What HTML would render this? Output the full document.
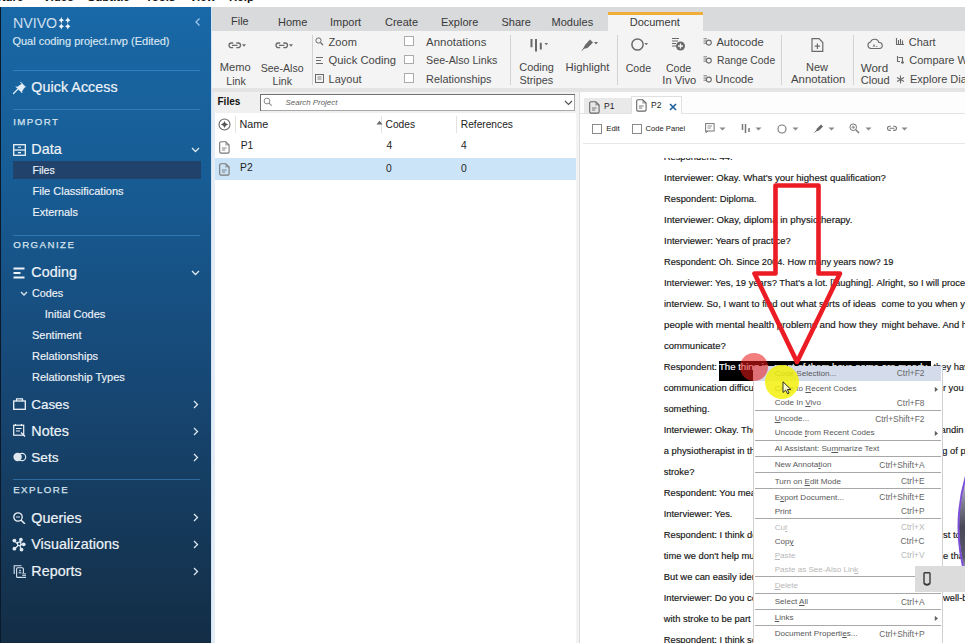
<!DOCTYPE html>
<html><head><meta charset="utf-8"><style>
html,body{margin:0;padding:0;width:965px;height:643px;overflow:hidden;background:#fff}
body{position:relative;font-family:"Liberation Sans",sans-serif}
.t{position:absolute;white-space:pre}
.d{-webkit-text-stroke:0.15px currentColor}
.r{position:absolute;display:block}
u{text-decoration:underline;text-underline-offset:1px}
</style></head><body>
<div class="r" style="left:0.00px;top:0.00px;width:965.00px;height:7.00px;background:#ffffff;"></div>
<div class="t" style="left:-20.00px;top:-8.43px;font-size:11.5px;line-height:11.5px;color:#111;font-weight:bold">Capture</div>
<div class="t" style="left:43.00px;top:-8.43px;font-size:11.5px;line-height:11.5px;color:#111;font-weight:bold">Video</div>
<div class="t" style="left:87.60px;top:-8.43px;font-size:11.5px;line-height:11.5px;color:#111;font-weight:bold">Subtitle</div>
<div class="t" style="left:145.50px;top:-8.43px;font-size:11.5px;line-height:11.5px;color:#111;font-weight:bold">Tools</div>
<div class="t" style="left:189.60px;top:-8.43px;font-size:11.5px;line-height:11.5px;color:#111;font-weight:bold">View</div>
<div class="t" style="left:229.00px;top:-8.43px;font-size:11.5px;line-height:11.5px;color:#111;font-weight:bold">Help</div>
<div class="r" style="left:0.00px;top:7.00px;width:211.00px;height:636.00px;background:linear-gradient(180deg,#1968a7 0%,#175c94 27%,#174a79 55%,#153a5c 80%,#132d45 100%);"></div>
<div class="r" style="left:0.00px;top:7.00px;width:1.00px;height:636.00px;background:#0a1a2a;"></div>
<div class="r" style="left:211.00px;top:7.00px;width:1.00px;height:636.00px;background:#cfe3f5;"></div>
<div class="t" style="left:12.60px;top:14.58px;font-size:15.5px;line-height:15.5px;color:rgba(240,248,255,0.85);transform:scaleX(0.915);transform-origin:0 0">NVIVO</div>
<svg class="r" style="left:57px;top:16px;" width="14" height="14" viewBox="0 0 14 14"><path d="M4.3 1.0999999999999996Q4.7 3.9 7.0 4.3Q4.7 4.7 4.3 7.5Q3.9 4.7 1.5999999999999996 4.3Q3.9 3.9 4.3 1.0999999999999996Z" fill="#f2f6fa"/><path d="M10.8 1.0999999999999996Q11.200000000000001 3.9 13.5 4.3Q11.200000000000001 4.7 10.8 7.5Q10.4 4.7 8.100000000000001 4.3Q10.4 3.9 10.8 1.0999999999999996Z" fill="#f2f6fa"/><path d="M4.3 7.2Q4.7 10.0 7.0 10.4Q4.7 10.8 4.3 13.600000000000001Q3.9 10.8 1.5999999999999996 10.4Q3.9 10.0 4.3 7.2Z" fill="#f2f6fa"/><path d="M10.8 7.2Q11.200000000000001 10.0 13.5 10.4Q11.200000000000001 10.8 10.8 13.600000000000001Q10.4 10.8 8.100000000000001 10.4Q10.4 10.0 10.8 7.2Z" fill="#f2f6fa"/></svg>
<svg class="r" style="left:194px;top:17px;" width="8" height="10" viewBox="0 0 8 10"><path d="M5.5 1.5L2 5L5.5 8.5" stroke="#9cc6ee" stroke-width="1.3" fill="none"/></svg>
<div class="t" style="left:12.40px;top:36.09px;font-size:11px;line-height:11px;color:#dce7f1;-webkit-text-stroke:0.15px #dce7f1">Qual coding project.nvp (Edited)</div>
<div class="r" style="left:13.00px;top:70.00px;width:187.00px;height:1.00px;background:rgba(80,165,235,0.42);"></div>
<svg class="r" style="left:12px;top:80px;" width="15" height="15" viewBox="0 0 15 15"><path d="M1.5 13.5L6 9" stroke="#e6f0fa" stroke-width="1.3" stroke-linecap="round"/><path d="M8.3 1.8L13.5 7L12.2 7.6L9.6 11.8L10.2 13L3.8 6.6L5 7.2L9.2 4.6L9.8 3.3Z" fill="#e6f0fa" stroke="#e6f0fa" stroke-width="0.6" stroke-linejoin="round"/></svg>
<div class="t" style="left:31.30px;top:80.00px;font-size:14.3px;line-height:14.3px;color:#eef3f8;letter-spacing:0.05px;-webkit-text-stroke:0.2px #eef3f8">Quick Access</div>
<div class="r" style="left:13.00px;top:109.30px;width:187.00px;height:1.00px;background:rgba(80,165,235,0.42);"></div>
<div class="t" style="left:13.20px;top:116.99px;font-size:9.7px;line-height:9.7px;color:#d6e3ef;letter-spacing:1.45px;-webkit-text-stroke:0.25px #d6e3ef">IMPORT</div>
<svg class="r" style="left:13px;top:144px;" width="13" height="12" viewBox="0 0 13 12"><rect x="0.7" y="0.7" width="11.6" height="10.6" fill="none" stroke="#eef3f8" stroke-width="1.3"/><path d="M0.7 6H12.3" stroke="#eef3f8" stroke-width="1.3"/><path d="M5 3.3H8M5 8.6H8" stroke="#eef3f8" stroke-width="1.1"/></svg>
<div class="t" style="left:31.30px;top:142.40px;font-size:14.3px;line-height:14.3px;color:#eef3f8;letter-spacing:0.05px;-webkit-text-stroke:0.2px #eef3f8">Data</div>
<svg class="r" style="left:191px;top:146.5px;" width="9" height="6" viewBox="0 0 9 6"><path d="M1 1L4.5 4.5L8 1" stroke="#dfe8f2" stroke-width="1.3" fill="none"/></svg>
<div class="r" style="left:13.20px;top:161.00px;width:187.40px;height:18.30px;background:#21426a;"></div>
<div class="t" style="left:32.50px;top:165.31px;font-size:10.5px;line-height:10.5px;color:#eef3f8;-webkit-text-stroke:0.15px #eef3f8">Files</div>
<div class="t" style="left:32.50px;top:186.09px;font-size:11px;line-height:11px;color:#eef3f8;-webkit-text-stroke:0.15px #eef3f8">File Classifications</div>
<div class="t" style="left:32.50px;top:207.07px;font-size:10.9px;line-height:10.9px;color:#eef3f8;-webkit-text-stroke:0.15px #eef3f8">Externals</div>
<div class="r" style="left:13.00px;top:235.20px;width:187.00px;height:1.00px;background:rgba(80,165,235,0.42);"></div>
<div class="t" style="left:13.20px;top:240.19px;font-size:9.7px;line-height:9.7px;color:#d6e3ef;letter-spacing:1.45px;-webkit-text-stroke:0.25px #d6e3ef">ORGANIZE</div>
<svg class="r" style="left:13px;top:267px;" width="13" height="12" viewBox="0 0 13 12"><path d="M0.5 1.5H11.5M0.5 6H7.5M0.5 10.5H11.5" stroke="#eef3f8" stroke-width="2"/></svg>
<div class="t" style="left:31.30px;top:265.40px;font-size:14.3px;line-height:14.3px;color:#eef3f8;letter-spacing:0.05px;-webkit-text-stroke:0.2px #eef3f8">Coding</div>
<svg class="r" style="left:191px;top:269.5px;" width="9" height="6" viewBox="0 0 9 6"><path d="M1 1L4.5 4.5L8 1" stroke="#dfe8f2" stroke-width="1.3" fill="none"/></svg>
<svg class="r" style="left:20px;top:290.5px;" width="8" height="6" viewBox="0 0 8 6"><path d="M1 1L4 4L7 1" stroke="#dfe8f2" stroke-width="1.3" fill="none"/></svg>
<div class="t" style="left:32.00px;top:288.46px;font-size:10.8px;line-height:10.8px;color:#eef3f8;-webkit-text-stroke:0.15px #eef3f8">Codes</div>
<div class="t" style="left:44.80px;top:309.19px;font-size:11px;line-height:11px;color:#eef3f8;-webkit-text-stroke:0.15px #eef3f8">Initial Codes</div>
<div class="t" style="left:32.00px;top:330.09px;font-size:11px;line-height:11px;color:#eef3f8;-webkit-text-stroke:0.15px #eef3f8">Sentiment</div>
<div class="t" style="left:32.00px;top:351.09px;font-size:11px;line-height:11px;color:#eef3f8;-webkit-text-stroke:0.15px #eef3f8">Relationships</div>
<div class="t" style="left:32.00px;top:371.99px;font-size:11px;line-height:11px;color:#eef3f8;-webkit-text-stroke:0.15px #eef3f8">Relationship Types</div>
<svg class="r" style="left:13px;top:398px;" width="13" height="12" viewBox="0 0 13 12"><rect x="0.7" y="3" width="11.6" height="8.3" fill="none" stroke="#eef3f8" stroke-width="1.3"/><path d="M3.5 3V0.8H9.5V3" stroke="#eef3f8" stroke-width="1.2" fill="none"/></svg>
<div class="t" style="left:31.30px;top:397.86px;font-size:13.4px;line-height:13.4px;color:#eef3f8;-webkit-text-stroke:0.2px #eef3f8">Cases</div>
<svg class="r" style="left:192.5px;top:399.5px;" width="6" height="9" viewBox="0 0 6 9"><path d="M1 1L4.5 4.5L1 8" stroke="#dfe8f2" stroke-width="1.3" fill="none"/></svg>
<svg class="r" style="left:13px;top:424px;" width="13" height="13" viewBox="0 0 13 13"><rect x="0.7" y="1.2" width="10" height="10" fill="none" stroke="#eef3f8" stroke-width="1.2"/><path d="M3 4.5H8.5M3 7H7" stroke="#eef3f8" stroke-width="1.1"/><path d="M8 8.5L12 12.5" stroke="#eef3f8" stroke-width="1.3"/><path d="M2.5 0V2M8.5 0V2" stroke="#eef3f8" stroke-width="1"/></svg>
<div class="t" style="left:31.30px;top:423.70px;font-size:14.3px;line-height:14.3px;color:#eef3f8;letter-spacing:0.05px;-webkit-text-stroke:0.2px #eef3f8">Notes</div>
<svg class="r" style="left:192.5px;top:426.5px;" width="6" height="9" viewBox="0 0 6 9"><path d="M1 1L4.5 4.5L1 8" stroke="#dfe8f2" stroke-width="1.3" fill="none"/></svg>
<svg class="r" style="left:13px;top:452px;" width="14" height="10" viewBox="0 0 14 10"><circle cx="9" cy="5" r="3.7" fill="none" stroke="#dfe6ee" stroke-width="1.2"/><circle cx="4.6" cy="5" r="4.2" fill="#dfe6ee"/></svg>
<div class="t" style="left:31.30px;top:451.19px;font-size:13.6px;line-height:13.6px;color:#eef3f8;-webkit-text-stroke:0.2px #eef3f8">Sets</div>
<svg class="r" style="left:192.5px;top:453px;" width="6" height="9" viewBox="0 0 6 9"><path d="M1 1L4.5 4.5L1 8" stroke="#dfe8f2" stroke-width="1.3" fill="none"/></svg>
<div class="r" style="left:13.00px;top:479.40px;width:187.00px;height:1.00px;background:rgba(80,165,235,0.42);"></div>
<div class="t" style="left:13.20px;top:484.99px;font-size:9.7px;line-height:9.7px;color:#d6e3ef;letter-spacing:1.45px;-webkit-text-stroke:0.25px #d6e3ef">EXPLORE</div>
<svg class="r" style="left:13px;top:512px;" width="13" height="12" viewBox="0 0 13 12"><circle cx="5" cy="5" r="4.2" fill="none" stroke="#eef3f8" stroke-width="1.3"/><path d="M8 8L12 12" stroke="#eef3f8" stroke-width="1.5"/><path d="M3 5H7" stroke="#eef3f8" stroke-width="0.9"/></svg>
<div class="t" style="left:31.30px;top:510.70px;font-size:14.3px;line-height:14.3px;color:#eef3f8;letter-spacing:0.05px;-webkit-text-stroke:0.2px #eef3f8">Queries</div>
<svg class="r" style="left:192.5px;top:513px;" width="6" height="9" viewBox="0 0 6 9"><path d="M1 1L4.5 4.5L1 8" stroke="#dfe8f2" stroke-width="1.3" fill="none"/></svg>
<svg class="r" style="left:12px;top:537px;" width="14" height="15" viewBox="0 0 14 15"><g stroke="#dfeaf5" stroke-width="1.2"><path d="M2.4 3.6L5.8 7.3M8.9 2.7L7.8 5.3M11.7 7.3H8.3M2.4 11.7L5.8 9M9.5 12.6L7.8 9"/></g><rect x="5.6" y="5.3" width="3.2" height="3.2" fill="none" stroke="#dfeaf5" stroke-width="1.2"/><g fill="#dfeaf5"><circle cx="2.4" cy="3.6" r="1.9"/><circle cx="8.9" cy="2.7" r="1.9"/><circle cx="11.7" cy="7.3" r="1.9"/><circle cx="2.4" cy="11.7" r="1.9"/><circle cx="9.5" cy="12.6" r="1.9"/></g></svg>
<div class="t" style="left:31.30px;top:537.00px;font-size:14.3px;line-height:14.3px;color:#eef3f8;letter-spacing:0.05px;-webkit-text-stroke:0.2px #eef3f8">Visualizations</div>
<svg class="r" style="left:192.5px;top:540px;" width="6" height="9" viewBox="0 0 6 9"><path d="M1 1L4.5 4.5L1 8" stroke="#dfe8f2" stroke-width="1.3" fill="none"/></svg>
<svg class="r" style="left:12px;top:564px;" width="15" height="15" viewBox="0 0 15 15"><path d="M2.2 10V1.8H9.5" fill="none" stroke="#d5e2ef" stroke-width="1.1"/><rect x="4.6" y="3.8" width="6.8" height="9.6" rx="1" fill="none" stroke="#d5e2ef" stroke-width="1.1"/><circle cx="8" cy="6.6" r="0.9" fill="#d5e2ef"/><path d="M6.6 8.8H9.4" stroke="#d5e2ef" stroke-width="1.1"/><rect x="10" y="9.2" width="4.2" height="5" fill="#14375a"/><path d="M10.2 9.9H14M10.2 11.7H14M10.2 13.5H14" stroke="#d5e2ef" stroke-width="1"/></svg>
<div class="t" style="left:31.30px;top:563.70px;font-size:14.3px;line-height:14.3px;color:#eef3f8;letter-spacing:0.05px;-webkit-text-stroke:0.2px #eef3f8">Reports</div>
<svg class="r" style="left:192.5px;top:566.5px;" width="6" height="9" viewBox="0 0 6 9"><path d="M1 1L4.5 4.5L1 8" stroke="#dfe8f2" stroke-width="1.3" fill="none"/></svg>
<div class="r" style="left:212.00px;top:7.00px;width:753.00px;height:23.50px;background:#d9dadc;"></div>
<div class="r" style="left:608.20px;top:12.00px;width:95.20px;height:18.50px;background:#f4f4f4;"></div>
<div class="r" style="left:608.20px;top:12.00px;width:95.20px;height:2.60px;background:#f0ad3a;"></div>
<div class="t" style="left:231.00px;top:16.09px;font-size:11px;line-height:11px;color:#383838;">File</div>
<div class="t" style="left:278.00px;top:16.69px;font-size:11px;line-height:11px;color:#383838;">Home</div>
<div class="t" style="left:330.00px;top:16.69px;font-size:11px;line-height:11px;color:#383838;">Import</div>
<div class="t" style="left:385.00px;top:16.69px;font-size:11px;line-height:11px;color:#383838;">Create</div>
<div class="t" style="left:441.00px;top:16.69px;font-size:11px;line-height:11px;color:#383838;">Explore</div>
<div class="t" style="left:501.50px;top:16.69px;font-size:11px;line-height:11px;color:#383838;">Share</div>
<div class="t" style="left:551.60px;top:16.69px;font-size:11px;line-height:11px;color:#383838;">Modules</div>
<div class="t" style="left:629.70px;top:16.69px;font-size:11px;line-height:11px;color:#383838;">Document</div>
<div class="r" style="left:212.00px;top:30.50px;width:753.00px;height:57.50px;background:#f4f4f4;"></div>
<div class="r" style="left:212.00px;top:88.00px;width:753.00px;height:4.00px;background:#e4e4e4;"></div>
<svg class="r" style="left:227.5px;top:41.5px;" width="20" height="8" viewBox="0 0 20 8"><path d="M5.2 1H3.3A2.3 2.3 0 0 0 3.3 5.6H5.2M8.3 1H10.2A2.3 2.3 0 0 1 10.2 5.6H8.3M4 3.3H9.5" stroke="#6a6a6a" stroke-width="1.35" fill="none"/><path d="M14 2.2L18 2.2L16 4.7Z" fill="#6a6a6a"/></svg>
<svg class="r" style="left:275px;top:41.5px;" width="20" height="8" viewBox="0 0 20 8"><path d="M5.2 1H3.3A2.3 2.3 0 0 0 3.3 5.6H5.2M8.3 1H10.2A2.3 2.3 0 0 1 10.2 5.6H8.3M4 3.3H9.5" stroke="#6a6a6a" stroke-width="1.35" fill="none"/><path d="M14 2.2L18 2.2L16 4.7Z" fill="#6a6a6a"/></svg>
<div class="t" style="left:219.80px;top:62.49px;font-size:11.12px;line-height:11.12px;color:#464646;">Memo</div>
<div class="t" style="left:226.30px;top:75.66px;font-size:10.68px;line-height:10.68px;color:#464646;">Link</div>
<div class="t" style="left:260.70px;top:62.95px;font-size:10.57px;line-height:10.57px;color:#464646;">See-Also</div>
<div class="t" style="left:272.50px;top:75.66px;font-size:10.68px;line-height:10.68px;color:#464646;">Link</div>
<div class="r" style="left:311.50px;top:35.00px;width:1.00px;height:50.00px;background:#d2d2d2;"></div>
<svg class="r" style="left:315px;top:37px;" width="9" height="9" viewBox="0 0 9 9"><circle cx="3.5" cy="3.5" r="2.6" fill="none" stroke="#6a6a6a" stroke-width="1"/><path d="M5.5 5.5L8 8" stroke="#6a6a6a" stroke-width="1.2"/></svg>
<svg class="r" style="left:315px;top:56px;" width="9" height="9" viewBox="0 0 9 9"><path d="M1 1.5H8M1 4.5H6M1 7.5H8" stroke="#6a6a6a" stroke-width="1"/></svg>
<svg class="r" style="left:315px;top:74px;" width="9" height="9" viewBox="0 0 9 9"><rect x="0.5" y="0.5" width="8" height="8" fill="none" stroke="#6a6a6a" stroke-width="1"/><path d="M2.5 3H6.5M2.5 5H6.5" stroke="#6a6a6a" stroke-width="0.8"/></svg>
<div class="t" style="left:328.60px;top:37.23px;font-size:11.07px;line-height:11.07px;color:#464646;">Zoom</div>
<div class="t" style="left:328.60px;top:55.19px;font-size:11.23px;line-height:11.23px;color:#464646;">Quick Coding</div>
<div class="t" style="left:328.60px;top:74.30px;font-size:10.99px;line-height:10.99px;color:#464646;">Layout</div>
<div class="r" style="left:404.20px;top:36.20px;width:9.40px;height:9.40px;background:#fff;box-shadow:inset 0 0 0 1px #ababab"></div>
<div class="r" style="left:404.20px;top:54.80px;width:9.40px;height:9.40px;background:#fff;box-shadow:inset 0 0 0 1px #ababab"></div>
<div class="r" style="left:404.20px;top:73.20px;width:9.40px;height:9.40px;background:#fff;box-shadow:inset 0 0 0 1px #ababab"></div>
<div class="t" style="left:426.10px;top:36.53px;font-size:11.42px;line-height:11.42px;color:#464646;">Annotations</div>
<div class="t" style="left:426.10px;top:55.25px;font-size:10.69px;line-height:10.69px;color:#464646;">See-Also Links</div>
<div class="t" style="left:426.10px;top:73.98px;font-size:10.89px;line-height:10.89px;color:#464646;">Relationships</div>
<div class="r" style="left:509.50px;top:35.00px;width:1.00px;height:50.00px;background:#d2d2d2;"></div>
<svg class="r" style="left:530px;top:38px;" width="20" height="15" viewBox="0 0 20 15"><path d="M1.5 1V9.2M6 1V13.6M10.8 4.8V11.5" stroke="#6a6a6a" stroke-width="2"/><path d="M14.5 5L18 5L16.25 7.2Z" fill="#6a6a6a"/></svg>
<div class="t" style="left:519.30px;top:62.43px;font-size:10.95px;line-height:10.95px;color:#464646;">Coding</div>
<div class="t" style="left:519.50px;top:75.13px;font-size:10.83px;line-height:10.83px;color:#464646;">Stripes</div>
<svg class="r" style="left:581px;top:37px;" width="18" height="14" viewBox="0 0 18 14"><path d="M2 12L4 8L9 2.5L12 5.5L6.5 11Z" fill="#6a6a6a"/><path d="M1 13.5L3 11" stroke="#6a6a6a" stroke-width="1"/><path d="M13 5L17 5L15 7.5Z" fill="#6a6a6a"/></svg>
<div class="t" style="left:565.60px;top:62.25px;font-size:11.28px;line-height:11.28px;color:#464646;">Highlight</div>
<div class="r" style="left:617.40px;top:35.00px;width:1.00px;height:50.00px;background:#d2d2d2;"></div>
<svg class="r" style="left:631px;top:38px;" width="18" height="14" viewBox="0 0 18 14"><circle cx="6.5" cy="6.5" r="5.6" fill="none" stroke="#6a6a6a" stroke-width="1.5"/><path d="M13.5 5L17 5L15.25 7.2Z" fill="#6a6a6a"/></svg>
<div class="t" style="left:625.70px;top:62.71px;font-size:10.62px;line-height:10.62px;color:#464646;">Code</div>
<svg class="r" style="left:671px;top:37px;" width="15" height="15" viewBox="0 0 15 15"><path d="M1 1.5H8M1 4H7M1 6.5H5M1 9H5" stroke="#6a6a6a" stroke-width="1.2"/><circle cx="9.5" cy="9" r="4.5" fill="#6a6a6a"/><path d="M9.5 6.5V11.5M7 9H12" stroke="#f4f4f4" stroke-width="1.3"/></svg>
<div class="t" style="left:665.90px;top:62.71px;font-size:10.62px;line-height:10.62px;color:#464646;">Code</div>
<div class="t" style="left:662.30px;top:75.23px;font-size:11.19px;line-height:11.19px;color:#464646;">In Vivo</div>
<svg class="r" style="left:703px;top:37.5px;" width="9" height="8" viewBox="0 0 9 8"><path d="M0.5 0.8H4M0.5 3H3M0.5 5.2H3" stroke="#6a6a6a" stroke-width="0.9"/><circle cx="5.8" cy="4.6" r="2.5" fill="none" stroke="#6a6a6a" stroke-width="1.1"/></svg>
<svg class="r" style="left:703px;top:55.5px;" width="9" height="8" viewBox="0 0 9 8"><path d="M0.5 0.8H4M0.5 3H3M0.5 5.2H3" stroke="#6a6a6a" stroke-width="0.9"/><circle cx="5.8" cy="4.6" r="2.5" fill="none" stroke="#6a6a6a" stroke-width="1.1"/></svg>
<svg class="r" style="left:703px;top:74.5px;" width="9" height="8" viewBox="0 0 9 8"><path d="M0.5 0.8H4M0.5 3H3M0.5 5.2H3" stroke="#6a6a6a" stroke-width="0.9"/><circle cx="5.8" cy="4.6" r="2.5" fill="none" stroke="#6a6a6a" stroke-width="1.1"/></svg>
<div class="t" style="left:716.40px;top:36.73px;font-size:11.19px;line-height:11.19px;color:#464646;">Autocode</div>
<div class="t" style="left:716.90px;top:55.51px;font-size:10.38px;line-height:10.38px;color:#464646;">Range Code</div>
<div class="t" style="left:715.30px;top:73.85px;font-size:11.05px;line-height:11.05px;color:#464646;">Uncode</div>
<div class="r" style="left:781.30px;top:35.00px;width:1.00px;height:50.00px;background:#d2d2d2;"></div>
<svg class="r" style="left:811px;top:38px;" width="13" height="14" viewBox="0 0 13 14"><path d="M1 0.7H8L11.8 4.5V13.3H1Z" fill="none" stroke="#6a6a6a" stroke-width="1.2"/><path d="M6.4 5.5V11M3.7 8.2H9.1" stroke="#6a6a6a" stroke-width="1.2"/></svg>
<div class="t" style="left:806.00px;top:62.09px;font-size:11.0px;line-height:11.0px;color:#464646;">New</div>
<div class="t" style="left:791.00px;top:74.47px;font-size:11.38px;line-height:11.38px;color:#464646;">Annotation</div>
<div class="r" style="left:852.60px;top:35.00px;width:1.00px;height:50.00px;background:#d2d2d2;"></div>
<svg class="r" style="left:867px;top:38px;" width="16" height="12" viewBox="0 0 16 12"><path d="M4 10.5A3.3 3.3 0 0 1 3.5 4A4.5 4.5 0 0 1 12 4.5A3 3 0 0 1 12.5 10.5Z" fill="none" stroke="#6a6a6a" stroke-width="1.1"/><path d="M6 9L7 6.5L8 9M9 8.5H10.5" stroke="#6a6a6a" stroke-width="0.7" fill="none"/></svg>
<div class="t" style="left:860.70px;top:61.58px;font-size:11.6px;line-height:11.6px;color:#464646;">Word</div>
<div class="t" style="left:860.70px;top:74.70px;font-size:11.1px;line-height:11.1px;color:#464646;">Cloud</div>
<svg class="r" style="left:895px;top:37px;" width="10" height="9" viewBox="0 0 10 9"><path d="M1.5 1V7.5H9M3.5 3V7M5.5 2V7M7.5 3.5V7" stroke="#6a6a6a" stroke-width="1.1" fill="none"/></svg>
<svg class="r" style="left:896px;top:55px;" width="9" height="10" viewBox="0 0 9 10"><path d="M1.5 1V6.5H4M2.5 2.5H6.5V8.5" stroke="#6a6a6a" stroke-width="1.1" fill="none"/><path d="M5 7.5H8" stroke="#6a6a6a" stroke-width="1.6"/></svg>
<svg class="r" style="left:896px;top:75px;" width="9" height="9" viewBox="0 0 9 9"><path d="M4.5 0.5V8.5M1 2.5L8 6.5M8 2.5L1 6.5" stroke="#6a6a6a" stroke-width="1.1"/></svg>
<div class="t" style="left:908.80px;top:37.32px;font-size:10.96px;line-height:10.96px;color:#464646;">Chart</div>
<div class="t" style="left:909.20px;top:54.89px;font-size:11px;line-height:11px;color:#464646;">Compare With</div>
<div class="t" style="left:910.00px;top:73.89px;font-size:11px;line-height:11px;color:#464646;">Explore Diagram</div>
<div class="r" style="left:212.00px;top:92.00px;width:368.00px;height:551.00px;background:#ffffff;"></div>
<div class="r" style="left:212.00px;top:92.00px;width:2.50px;height:551.00px;background:#e4edf5;"></div>
<div class="r" style="left:214.00px;top:89.70px;width:365.00px;height:23.30px;background:#f0f0f0;"></div>
<div class="r" style="left:212.00px;top:88.00px;width:753.00px;height:4.00px;background:#e4e4e4;"></div>
<div class="t" style="left:217.50px;top:96.73px;font-size:10px;line-height:10px;color:#111;font-weight:bold">Files</div>
<div class="r" style="left:260.00px;top:94.40px;width:315.00px;height:16.40px;background:#fff;box-shadow:inset 1px 1px 0 #707070, inset -1px -1px 0 #a8a8a8"></div>
<svg class="r" style="left:263px;top:97px;" width="10" height="10" viewBox="0 0 10 10"><circle cx="4" cy="4" r="2.9" fill="none" stroke="#8a8a8a" stroke-width="1"/><path d="M6.1 6.1L8.6 8.6" stroke="#8a8a8a" stroke-width="1.1"/></svg>
<div class="t" style="left:285.60px;top:98.71px;font-size:7.9px;line-height:7.9px;color:#606060;font-style:italic">Search Project</div>
<svg class="r" style="left:564px;top:100.2px;" width="9" height="6" viewBox="0 0 9 6"><path d="M1 1L4.5 4.5L8 1" stroke="#555" stroke-width="1.2" fill="none"/></svg>
<svg class="r" style="left:218px;top:118px;" width="13" height="13" viewBox="0 0 13 13"><circle cx="6.5" cy="6.5" r="5.5" fill="none" stroke="#666" stroke-width="1.1"/><path d="M6.5 2.9Q7.1 5.9 10.1 6.5Q7.1 7.1 6.5 10.1Q5.9 7.1 2.9 6.5Q5.9 5.9 6.5 2.9Z" fill="#555"/></svg>
<div class="r" style="left:235.20px;top:116.00px;width:1.00px;height:17.00px;background:#e2e2e2;"></div>
<div class="r" style="left:381.40px;top:116.00px;width:1.00px;height:17.00px;background:#e2e2e2;"></div>
<div class="r" style="left:456.20px;top:116.00px;width:1.00px;height:17.00px;background:#e2e2e2;"></div>
<div class="t" style="left:239.50px;top:119.26px;font-size:10.8px;line-height:10.8px;color:#222;">Name</div>
<svg class="r" style="left:376px;top:120px;" width="7" height="5" viewBox="0 0 7 5"><path d="M0.5 4.5L3.5 0.8L6.5 4.5Z" fill="#666"/></svg>
<div class="t" style="left:385.60px;top:119.77px;font-size:10.2px;line-height:10.2px;color:#222;">Codes</div>
<div class="t" style="left:460.80px;top:119.77px;font-size:10.2px;line-height:10.2px;color:#222;">References</div>
<svg class="r" style="left:218.5px;top:140.5px;" width="11" height="13" viewBox="0 0 11 13"><path d="M2 0.7H6.8L10.1 4V10.8A1.3 1.3 0 0 1 8.8 12.1H2A1.3 1.3 0 0 1 0.7 10.8V2A1.3 1.3 0 0 1 2 0.7Z" fill="none" stroke="#777" stroke-width="1.1"/><path d="M6.6 0.8V4.2H10" fill="#777" stroke="#777" stroke-width="0.6" opacity="0.55"/><path d="M2.9 7H7.6M2.9 9H6.2" stroke="#777" stroke-width="0.9"/></svg>
<div class="t" style="left:240.70px;top:140.88px;font-size:10.3px;line-height:10.3px;color:#222;">P1</div>
<div class="t" style="left:386.50px;top:141.08px;font-size:10.3px;line-height:10.3px;color:#222;">4</div>
<div class="t" style="left:461.00px;top:141.08px;font-size:10.3px;line-height:10.3px;color:#222;">4</div>
<div class="r" style="left:215.00px;top:157.50px;width:361.00px;height:22.80px;background:#cce4f7;"></div>
<svg class="r" style="left:218.5px;top:163px;" width="11" height="13" viewBox="0 0 11 13"><path d="M2 0.7H6.8L10.1 4V10.8A1.3 1.3 0 0 1 8.8 12.1H2A1.3 1.3 0 0 1 0.7 10.8V2A1.3 1.3 0 0 1 2 0.7Z" fill="none" stroke="#777" stroke-width="1.1"/><path d="M6.6 0.8V4.2H10" fill="#777" stroke="#777" stroke-width="0.6" opacity="0.55"/><path d="M2.9 7H7.6M2.9 9H6.2" stroke="#777" stroke-width="0.9"/></svg>
<div class="t" style="left:240.10px;top:163.28px;font-size:10.3px;line-height:10.3px;color:#222;">P2</div>
<div class="t" style="left:386.00px;top:163.58px;font-size:10.3px;line-height:10.3px;color:#222;">0</div>
<div class="t" style="left:461.00px;top:163.58px;font-size:10.3px;line-height:10.3px;color:#222;">0</div>
<div class="r" style="left:576.00px;top:92.00px;width:4.00px;height:551.00px;background:#f3f3f3;"></div>
<div class="r" style="left:579.30px;top:92.00px;width:1.00px;height:551.00px;background:#dddddd;"></div>
<div class="r" style="left:580.00px;top:92.00px;width:385.00px;height:551.00px;background:#ffffff;"></div>
<div class="r" style="left:580.00px;top:92.00px;width:385.00px;height:21.00px;background:#fdfdfd;"></div>
<div class="r" style="left:584.00px;top:98.40px;width:47.00px;height:14.60px;background:#e9e9e9;"></div>
<div class="r" style="left:631.00px;top:96.30px;width:51.00px;height:16.70px;background:#ffffff;box-shadow:inset 1px 0 0 #e0e0e0, inset -1px 0 0 #e0e0e0, inset 0 1px 0 #e0e0e0"></div>
<div class="r" style="left:580.00px;top:113.00px;width:385.00px;height:1.00px;background:#e3e3e3;"></div>
<div class="r" style="left:631.80px;top:112.50px;width:49.40px;height:1.50px;background:#ffffff;"></div>
<svg class="r" style="left:589px;top:100.5px;" width="11" height="13" viewBox="0 0 11 13"><path d="M2 0.7H6.8L10.1 4V10.8A1.3 1.3 0 0 1 8.8 12.1H2A1.3 1.3 0 0 1 0.7 10.8V2A1.3 1.3 0 0 1 2 0.7Z" fill="none" stroke="#666" stroke-width="1.1"/><path d="M6.6 0.8V4.2H10" fill="#666" stroke="#666" stroke-width="0.6" opacity="0.55"/><path d="M2.9 7H7.6M2.9 9H6.2" stroke="#666" stroke-width="0.9"/></svg>
<div class="t" style="left:604.00px;top:101.50px;font-size:8.5px;line-height:8.5px;color:#222;">P1</div>
<svg class="r" style="left:636px;top:98.5px;" width="11" height="13" viewBox="0 0 11 13"><path d="M2 0.7H6.8L10.1 4V10.8A1.3 1.3 0 0 1 8.8 12.1H2A1.3 1.3 0 0 1 0.7 10.8V2A1.3 1.3 0 0 1 2 0.7Z" fill="none" stroke="#666" stroke-width="1.1"/><path d="M6.6 0.8V4.2H10" fill="#666" stroke="#666" stroke-width="0.6" opacity="0.55"/><path d="M2.9 7H7.6M2.9 9H6.2" stroke="#666" stroke-width="0.9"/></svg>
<div class="t" style="left:651.00px;top:100.50px;font-size:8.5px;line-height:8.5px;color:#222;">P2</div>
<svg class="r" style="left:669px;top:103px;" width="8" height="8" viewBox="0 0 8 8"><path d="M1 1L7 7M7 1L1 7" stroke="#1d5fa0" stroke-width="1.6"/></svg>
<div class="r" style="left:583.00px;top:143.30px;width:382.00px;height:1.00px;background:#e6e6e6;"></div>
<div class="r" style="left:592.40px;top:124.00px;width:9.60px;height:9.60px;background:#fff;box-shadow:inset 0 0 0 1px #8a8a8a"></div>
<div class="t" style="left:606.30px;top:124.70px;font-size:7.8px;line-height:7.8px;color:#222;">Edit</div>
<div class="r" style="left:632.00px;top:124.00px;width:9.60px;height:9.60px;background:#fff;box-shadow:inset 0 0 0 1px #8a8a8a"></div>
<div class="t" style="left:645.60px;top:124.87px;font-size:7.6px;line-height:7.6px;color:#222;">Code Panel</div>
<svg class="r" style="left:704.5px;top:123px;" width="10" height="10" viewBox="0 0 10 10"><rect x="0.6" y="0.6" width="8.5" height="7.4" fill="none" stroke="#777" stroke-width="1"/><path d="M2.5 3H7M2.5 5H6" stroke="#777" stroke-width="0.8"/><path d="M1 8V9.8L3 8" stroke="#777" stroke-width="0.9" fill="none"/></svg>
<svg class="r" style="left:719px;top:127px;" width="7" height="4" viewBox="0 0 7 4"><path d="M0.5 0.5H6.5L3.5 3.5Z" fill="#888"/></svg>
<svg class="r" style="left:741px;top:123px;" width="10" height="11" viewBox="0 0 10 11"><path d="M1.5 1V7M4.5 1V10M8 5V9" stroke="#777" stroke-width="1.5"/></svg>
<svg class="r" style="left:755px;top:127px;" width="7" height="4" viewBox="0 0 7 4"><path d="M0.5 0.5H6.5L3.5 3.5Z" fill="#888"/></svg>
<svg class="r" style="left:777px;top:124px;" width="10" height="10" viewBox="0 0 10 10"><circle cx="5" cy="5" r="4" fill="none" stroke="#777" stroke-width="1.1"/></svg>
<svg class="r" style="left:791.5px;top:127px;" width="7" height="4" viewBox="0 0 7 4"><path d="M0.5 0.5H6.5L3.5 3.5Z" fill="#888"/></svg>
<svg class="r" style="left:814px;top:123px;" width="10" height="10" viewBox="0 0 10 10"><path d="M1.5 8.5L3 5.5L7 1.5L9 3.5L5 7.5Z" fill="#666"/><path d="M0.8 9.5L2 8" stroke="#666" stroke-width="0.9"/></svg>
<svg class="r" style="left:828px;top:127px;" width="7" height="4" viewBox="0 0 7 4"><path d="M0.5 0.5H6.5L3.5 3.5Z" fill="#888"/></svg>
<svg class="r" style="left:849px;top:123px;" width="11" height="11" viewBox="0 0 11 11"><circle cx="4.2" cy="4.2" r="3.3" fill="none" stroke="#777" stroke-width="1"/><path d="M6.8 6.8L10 10" stroke="#777" stroke-width="1.4"/><path d="M4.2 2.5V6M2.5 4.2H6" stroke="#777" stroke-width="0.8"/></svg>
<svg class="r" style="left:864.5px;top:127px;" width="7" height="4" viewBox="0 0 7 4"><path d="M0.5 0.5H6.5L3.5 3.5Z" fill="#888"/></svg>
<svg class="r" style="left:886.5px;top:125px;" width="11" height="7" viewBox="0 0 11 7"><path d="M3.8 1.2H2.6A2.1 2.1 0 0 0 2.6 5.4H3.8M6.2 1.2H7.4A2.1 2.1 0 0 1 7.4 5.4H6.2M2.6 3.3H7.4" stroke="#777" stroke-width="1.1" fill="none"/></svg>
<svg class="r" style="left:901px;top:127px;" width="7" height="4" viewBox="0 0 7 4"><path d="M0.5 0.5H6.5L3.5 3.5Z" fill="#888"/></svg>
<div class="r" style="left:580px;top:157.9px;width:385px;height:486px;overflow:hidden">
<div class="t d" style="left:83.70px;top:-5.46px;font-size:9.4px;line-height:9.4px;color:#151515;">Respondent: 44.</div>
<div class="t d" style="left:83.70px;top:15.14px;font-size:9.4px;line-height:9.4px;color:#151515;transform:scaleX(1.0234);transform-origin:0 0;">Interviewer: Okay. What&#39;s your highest qualification?</div>
<div class="t d" style="left:83.70px;top:36.12px;font-size:9.4px;line-height:9.4px;color:#151515;transform:scaleX(0.9982);transform-origin:0 0;">Respondent: Diploma.</div>
<div class="t d" style="left:83.70px;top:57.10px;font-size:9.4px;line-height:9.4px;color:#151515;transform:scaleX(1.0291);transform-origin:0 0;">Interviewer: Okay, diploma in physiotherapy.</div>
<div class="t d" style="left:83.70px;top:78.08px;font-size:9.4px;line-height:9.4px;color:#151515;transform:scaleX(1.0096);transform-origin:0 0;">Interviewer: Years of practice?</div>
<div class="t d" style="left:83.70px;top:99.06px;font-size:9.4px;line-height:9.4px;color:#151515;transform:scaleX(0.9830);transform-origin:0 0;">Respondent: Oh. Since 2004. How many years now? 19</div>
<div class="t d" style="left:83.70px;top:120.04px;font-size:9.4px;line-height:9.4px;color:#151515;transform:scaleX(1.0031);transform-origin:0 0;">Interviewer: Yes, 19 years? That&#39;s a lot. [laughing].</div>
<div class="t d" style="left:296.60px;top:120.04px;font-size:9.4px;line-height:9.4px;color:#151515;">Alright, so I will proceed</div>
<div class="t d" style="left:83.70px;top:141.02px;font-size:9.4px;line-height:9.4px;color:#151515;transform:scaleX(1.0187);transform-origin:0 0;">interview. So, I want to find out what sorts of ideas</div>
<div class="t d" style="left:301.50px;top:141.02px;font-size:9.4px;line-height:9.4px;color:#151515;">come to you when you</div>
<div class="t d" style="left:83.70px;top:162.00px;font-size:9.4px;line-height:9.4px;color:#151515;transform:scaleX(1.0361);transform-origin:0 0;">people with mental health problems and how they</div>
<div class="t d" style="left:301.50px;top:162.00px;font-size:9.4px;line-height:9.4px;color:#151515;">might behave. And how</div>
<div class="t d" style="left:83.70px;top:182.98px;font-size:9.4px;line-height:9.4px;color:#151515;transform:scaleX(1.0136);transform-origin:0 0;">communicate?</div>
<div class="t d" style="left:83.70px;top:203.96px;font-size:9.4px;line-height:9.4px;color:#151515;">Respondent: </div>
<div class="t d" style="left:83.70px;top:224.94px;font-size:9.4px;line-height:9.4px;color:#151515;">communication difficulties. Some of them</div>
<div class="t d" style="left:362.90px;top:224.94px;font-size:9.4px;line-height:9.4px;color:#151515;">r you</div>
<div class="t d" style="left:83.70px;top:245.92px;font-size:9.4px;line-height:9.4px;color:#151515;">something.</div>
<div class="t d" style="left:83.70px;top:266.90px;font-size:9.4px;line-height:9.4px;color:#151515;">Interviewer: Okay. Then what is your</div>
<div class="t d" style="left:360.50px;top:266.90px;font-size:9.4px;line-height:9.4px;color:#151515;">andin</div>
<div class="t d" style="left:83.70px;top:287.88px;font-size:9.4px;line-height:9.4px;color:#151515;">a physiotherapist in the context of</div>
<div class="t d" style="left:362.30px;top:287.88px;font-size:9.4px;line-height:9.4px;color:#151515;">g of pa</div>
<div class="t d" style="left:83.70px;top:308.86px;font-size:9.4px;line-height:9.4px;color:#151515;">stroke?</div>
<div class="t d" style="left:83.70px;top:329.84px;font-size:9.4px;line-height:9.4px;color:#151515;">Respondent: You mean the mental health</div>
<div class="t d" style="left:83.70px;top:350.82px;font-size:9.4px;line-height:9.4px;color:#151515;">Interviewer: Yes.</div>
<div class="t d" style="left:83.70px;top:371.80px;font-size:9.4px;line-height:9.4px;color:#151515;">Respondent: I think depression is the most</div>
<div class="t d" style="left:363.00px;top:371.80px;font-size:9.4px;line-height:9.4px;color:#151515;">st to</div>
<div class="t d" style="left:83.70px;top:392.78px;font-size:9.4px;line-height:9.4px;color:#151515;">time we don&#39;t help much because we only</div>
<div class="t d" style="left:363.00px;top:392.78px;font-size:9.4px;line-height:9.4px;color:#151515;">e tha</div>
<div class="t d" style="left:83.70px;top:413.76px;font-size:9.4px;line-height:9.4px;color:#151515;">But we can easily identify them because</div>
<div class="t d" style="left:83.70px;top:434.74px;font-size:9.4px;line-height:9.4px;color:#151515;">Interviewer: Do you consider the mental</div>
<div class="t d" style="left:363.00px;top:434.74px;font-size:9.4px;line-height:9.4px;color:#151515;">well-b</div>
<div class="t d" style="left:83.70px;top:455.72px;font-size:9.4px;line-height:9.4px;color:#151515;">with stroke to be part of your job?</div>
<div class="t d" style="left:83.70px;top:476.70px;font-size:9.4px;line-height:9.4px;color:#151515;">Respondent: I think so, sometimes.</div>
<div class="t d" style="left:353.50px;top:203.96px;font-size:9.4px;line-height:9.4px;color:#151515;">they have</div>
<div class="r" style="left:138.60000000000002px;top:203.29999999999998px;width:212.39999999999998px;height:20.3px;background:#000"></div>
<div class="t d" style="left:139.00px;top:203.96px;font-size:9.4px;line-height:9.4px;color:#ffffff;transform:scaleX(1.0237);transform-origin:0 0;">The thing is, most of them have some are moody.</div>
</div>
<svg class="r" style="left:740px;top:175px;" width="115" height="200" viewBox="0 0 115 200"><path d="M35.5 10.5H78.5V98.5H100L57 187L14.5 98.5H35.5Z" fill="none" stroke="#ec1c24" stroke-width="4.6" stroke-linejoin="round"/></svg>
<div class="r" style="left:753.4px;top:366.2px;width:189.2px;height:290px;background:#ffffff;box-shadow:inset 1px 0 0 #d0d0d0, inset -1px 0 0 #d0d0d0, inset 0 1px 0 #d0d0d0"></div>
<div class="r" style="left:753.40px;top:366.20px;width:187.70px;height:15.00px;background:#d4dcec;"></div>
<div class="t" style="left:774.70px;top:369.64px;font-size:8.1px;line-height:8.1px;color:#585858;white-space:nowrap">Code Selection...</div>
<div class="t" style="right:40.5px;top:369.39px;font-size:8.4px;line-height:8.4px;color:#666666;text-align:right">Ctrl+F2</div>
<div class="t" style="left:774.70px;top:385.14px;font-size:8.1px;line-height:8.1px;color:#585858;white-space:nowrap">Code to <u>R</u>ecent Codes</div>
<svg class="r" style="left:933.5px;top:385.8px;" width="5" height="7" viewBox="0 0 5 7"><path d="M0.8 0.8L4 3.4L0.8 6Z" fill="#606060"/></svg>
<div class="t" style="left:774.70px;top:399.14px;font-size:8.1px;line-height:8.1px;color:#585858;white-space:nowrap">Code In <u>V</u>ivo</div>
<div class="t" style="right:40.5px;top:398.89px;font-size:8.4px;line-height:8.4px;color:#666666;text-align:right">Ctrl+F8</div>
<div class="r" style="left:755.00px;top:409.80px;width:185.70px;height:1.10px;background:#a8a8a8;"></div>
<div class="t" style="left:774.70px;top:415.24px;font-size:8.1px;line-height:8.1px;color:#585858;white-space:nowrap"><u>U</u>ncode...</div>
<div class="t" style="right:40.5px;top:414.99px;font-size:8.4px;line-height:8.4px;color:#666666;text-align:right">Ctrl+Shift+F2</div>
<div class="t" style="left:774.70px;top:429.24px;font-size:8.1px;line-height:8.1px;color:#585858;white-space:nowrap">Uncode <u>f</u>rom Recent Codes</div>
<svg class="r" style="left:933.5px;top:429.90000000000003px;" width="5" height="7" viewBox="0 0 5 7"><path d="M0.8 0.8L4 3.4L0.8 6Z" fill="#606060"/></svg>
<div class="r" style="left:755.00px;top:439.90px;width:185.70px;height:1.10px;background:#a8a8a8;"></div>
<div class="t" style="left:774.70px;top:445.34px;font-size:8.1px;line-height:8.1px;color:#585858;white-space:nowrap">AI Assistant: Su<u>m</u>marize Text</div>
<div class="r" style="left:755.00px;top:456.00px;width:185.70px;height:1.10px;background:#a8a8a8;"></div>
<div class="t" style="left:774.70px;top:461.44px;font-size:8.1px;line-height:8.1px;color:#585858;white-space:nowrap">New Annota<u>t</u>ion</div>
<div class="t" style="right:40.5px;top:461.19px;font-size:8.4px;line-height:8.4px;color:#666666;text-align:right">Ctrl+Shift+A</div>
<div class="r" style="left:755.00px;top:472.10px;width:185.70px;height:1.10px;background:#a8a8a8;"></div>
<div class="t" style="left:774.70px;top:477.54px;font-size:8.1px;line-height:8.1px;color:#585858;white-space:nowrap">Turn on <u>E</u>dit Mode</div>
<div class="t" style="right:40.5px;top:477.29px;font-size:8.4px;line-height:8.4px;color:#666666;text-align:right">Ctrl+E</div>
<div class="r" style="left:755.00px;top:488.20px;width:185.70px;height:1.10px;background:#a8a8a8;"></div>
<div class="t" style="left:774.70px;top:493.64px;font-size:8.1px;line-height:8.1px;color:#585858;white-space:nowrap">E<u>x</u>port Document...</div>
<div class="t" style="right:40.5px;top:493.39px;font-size:8.4px;line-height:8.4px;color:#666666;text-align:right">Ctrl+Shift+E</div>
<div class="t" style="left:774.70px;top:507.64px;font-size:8.1px;line-height:8.1px;color:#585858;white-space:nowrap">Print</div>
<div class="t" style="right:40.5px;top:507.39px;font-size:8.4px;line-height:8.4px;color:#666666;text-align:right">Ctrl+P</div>
<div class="r" style="left:755.00px;top:518.30px;width:185.70px;height:1.10px;background:#a8a8a8;"></div>
<div class="t" style="left:774.70px;top:523.74px;font-size:8.1px;line-height:8.1px;color:#b8b8b8;white-space:nowrap">Cu<u>t</u></div>
<div class="t" style="right:40.5px;top:523.49px;font-size:8.4px;line-height:8.4px;color:#b8b8b8;text-align:right">Ctrl+X</div>
<div class="t" style="left:774.70px;top:537.74px;font-size:8.1px;line-height:8.1px;color:#585858;white-space:nowrap">Cop<u>y</u></div>
<div class="t" style="right:40.5px;top:537.49px;font-size:8.4px;line-height:8.4px;color:#666666;text-align:right">Ctrl+C</div>
<div class="t" style="left:774.70px;top:551.74px;font-size:8.1px;line-height:8.1px;color:#b8b8b8;white-space:nowrap"><u>P</u>aste</div>
<div class="t" style="right:40.5px;top:551.49px;font-size:8.4px;line-height:8.4px;color:#b8b8b8;text-align:right">Ctrl+V</div>
<div class="t" style="left:774.70px;top:565.74px;font-size:8.1px;line-height:8.1px;color:#b8b8b8;white-space:nowrap">Paste as See-Also Lin<u>k</u></div>
<div class="r" style="left:755.00px;top:576.40px;width:185.70px;height:1.10px;background:#a8a8a8;"></div>
<div class="t" style="left:774.70px;top:581.84px;font-size:8.1px;line-height:8.1px;color:#b8b8b8;white-space:nowrap"><u>D</u>elete</div>
<div class="r" style="left:755.00px;top:592.50px;width:185.70px;height:1.10px;background:#a8a8a8;"></div>
<div class="t" style="left:774.70px;top:597.94px;font-size:8.1px;line-height:8.1px;color:#585858;white-space:nowrap">Select <u>A</u>ll</div>
<div class="t" style="right:40.5px;top:597.69px;font-size:8.4px;line-height:8.4px;color:#666666;text-align:right">Ctrl+A</div>
<div class="r" style="left:755.00px;top:608.60px;width:185.70px;height:1.10px;background:#a8a8a8;"></div>
<div class="t" style="left:774.70px;top:614.04px;font-size:8.1px;line-height:8.1px;color:#585858;white-space:nowrap"><u>L</u>inks</div>
<svg class="r" style="left:933.5px;top:614.7px;" width="5" height="7" viewBox="0 0 5 7"><path d="M0.8 0.8L4 3.4L0.8 6Z" fill="#606060"/></svg>
<div class="r" style="left:755.00px;top:624.70px;width:185.70px;height:1.10px;background:#a8a8a8;"></div>
<div class="t" style="left:774.70px;top:630.14px;font-size:8.1px;line-height:8.1px;color:#585858;white-space:nowrap">Document Properti<u>e</u>s...</div>
<div class="t" style="right:40.5px;top:629.89px;font-size:8.4px;line-height:8.4px;color:#666666;text-align:right">Ctrl+Shift+P</div>
<svg class="r" style="left:945px;top:465px;" width="20" height="130" viewBox="0 0 20 130"><defs><linearGradient id="wc" x1="0" y1="0" x2="0" y2="1"><stop offset="0" stop-color="#e4e4ec"/><stop offset="0.22" stop-color="#8a8a9a"/><stop offset="0.5" stop-color="#474757"/><stop offset="0.8" stop-color="#5a5a6a"/><stop offset="1" stop-color="#e8e8f0"/></linearGradient></defs><path d="M22 11Q6 62 22 113Z" fill="url(#wc)"/><path d="M21 11Q6 62 21 113" fill="none" stroke="#7b4fd6" stroke-width="2"/></svg>
<div class="r" style="left:914.70px;top:565.80px;width:50.30px;height:26.50px;background:#dcdcdc;"></div>
<svg class="r" style="left:921px;top:572px;" width="12" height="16" viewBox="0 0 12 16"><path d="M3 1.5A1 1 0 0 1 4 0.8H8A1 1 0 0 1 9 1.5L9 10.5A3 2.2 0 0 1 3 10.5Z" fill="none" stroke="#3a3a3a" stroke-width="1.4"/><path d="M3.6 11.6Q6 13.8 8.4 11.6" stroke="#3a3a3a" stroke-width="1.6" fill="none"/></svg>
<div class="r" style="left:739.7px;top:352.8px;width:28px;height:28px;border-radius:50%;background:rgba(232,25,25,0.56)"></div>
<div class="r" style="left:764.6px;top:364.6px;width:34px;height:34px;border-radius:50%;background:rgba(242,240,10,0.84)"></div>
<svg class="r" style="left:781.5px;top:380.5px;" width="11" height="14" viewBox="0 0 11 14"><path d="M1 0.8V11.5L3.6 9.2L5.6 12.8L7.1 12.1L5.3 8.5H8.9Z" fill="rgba(255,255,240,0.85)" stroke="#1a1a1a" stroke-width="0.9" stroke-linejoin="round"/></svg>
</body></html>
